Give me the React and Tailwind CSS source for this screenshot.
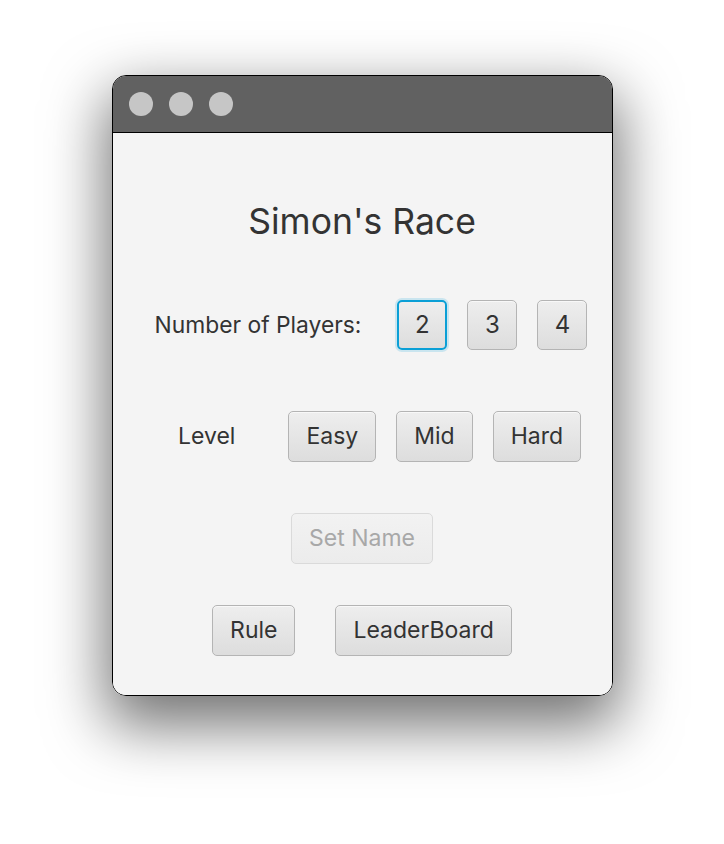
export default function App() {
  return (
    <div className="flex min-h-[844px] w-full justify-center bg-white pt-[75px] font-['Inter','Noto_Sans',sans-serif] text-[#333333]">
      <div className="flex h-[621px] w-[501px] flex-col overflow-hidden rounded-[14px] border border-black shadow-[0_24px_60px_6px_rgba(0,0,0,0.55)]">
        <TitleBar />
        <div className="flex flex-1 flex-col items-center bg-[#f4f4f4]">
          <h1 className="mt-[68px] text-[35.5px] leading-[42px]">Simon's Race</h1>

          <div className="mt-[57px] flex items-center pl-[18px]">
            <span className="mr-[36px] text-[22.8px]">Number of Players:</span>
            <div className="flex gap-[20px]">
              <SquareButton focused>2</SquareButton>
              <SquareButton>3</SquareButton>
              <SquareButton>4</SquareButton>
            </div>
          </div>

          <div className="mt-[61px] flex items-center pl-[35px]">
            <span className="mr-[53px] text-[23px]">Level</span>
            <div className="flex gap-[20px]">
              <PlainButton>Easy</PlainButton>
              <PlainButton>Mid</PlainButton>
              <PlainButton>Hard</PlainButton>
            </div>
          </div>

          <div className="mt-[51px]">
            <PlainButton disabled>Set Name</PlainButton>
          </div>

          <div className="mt-[41px] flex gap-[40px]">
            <PlainButton>Rule</PlainButton>
            <PlainButton>LeaderBoard</PlainButton>
          </div>
        </div>
      </div>
    </div>
  );
}

function TitleBar() {
  return (
    <div className="flex h-[57px] shrink-0 items-center gap-[16px] border-b border-black bg-[#616161] pl-[16px]">
      <span className="h-[24px] w-[24px] rounded-full bg-[#c6c6c6]" />
      <span className="h-[24px] w-[24px] rounded-full bg-[#c6c6c6]" />
      <span className="h-[24px] w-[24px] rounded-full bg-[#c6c6c6]" />
    </div>
  );
}

function SquareButton({ children, focused }) {
  return (
    <button
      type="button"
      className={
        focused
          ? "grid h-[50px] w-[50px] place-items-center rounded-[5px] border-2 border-[#0a9fd6] bg-gradient-to-b from-[#eeeeee] to-[#dddddd] text-[24px] text-[#333333] shadow-[0_0_0_2px_rgba(10,159,214,0.18)]"
          : "grid h-[50px] w-[50px] place-items-center rounded-[5px] border border-[#b4b4b4] bg-gradient-to-b from-[#eeeeee] to-[#dddddd] text-[24px] text-[#333333] shadow-[inset_0_1px_0_#f8f8f8]"
      }
    >
      {children}
    </button>
  );
}

function PlainButton({ children, disabled }) {
  return (
    <button
      type="button"
      disabled={disabled}
      className={
        disabled
          ? "h-[51px] rounded-[5px] border border-[#dadada] bg-gradient-to-b from-[#f2f2f2] to-[#ececec] px-[17px] text-[23px] text-[#a8a8a8]"
          : "h-[51px] rounded-[5px] border border-[#b4b4b4] bg-gradient-to-b from-[#eeeeee] to-[#dddddd] px-[17px] text-[23px] text-[#333333] shadow-[inset_0_1px_0_#f8f8f8]"
      }
    >
      {children}
    </button>
  );
}
